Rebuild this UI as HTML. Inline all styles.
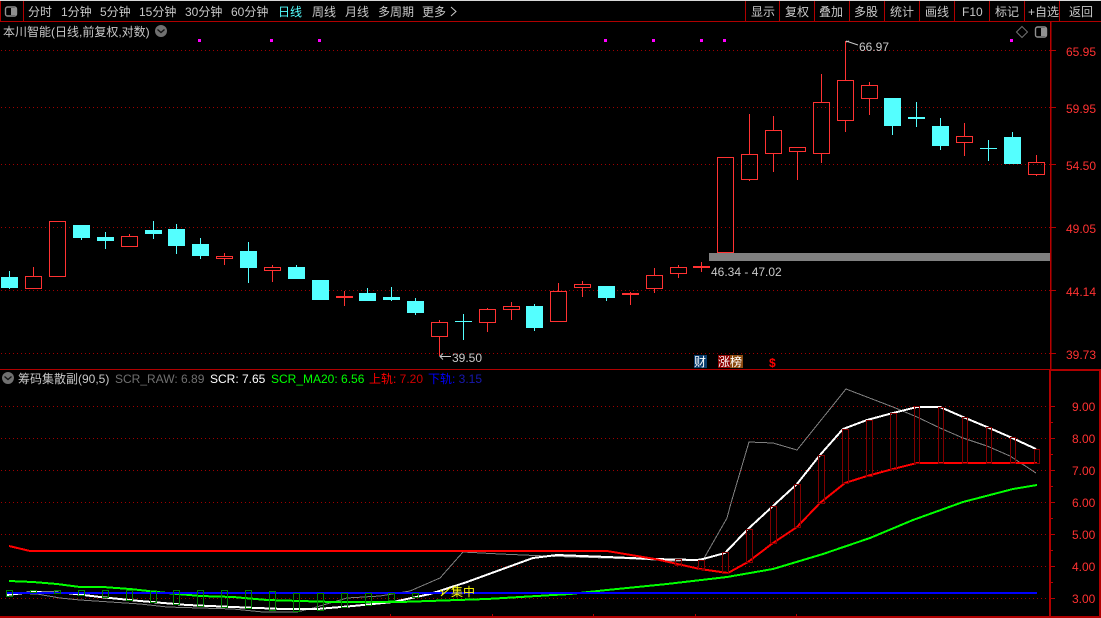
<!DOCTYPE html>
<html>
<head>
<meta charset="utf-8">
<style>
html,body{margin:0;padding:0;background:#000;width:1101px;height:618px;overflow:hidden}
svg{display:block}
text{font-family:"Liberation Sans","WenQuanYi Zen Hei","Noto Sans CJK SC",sans-serif;font-size:12px;white-space:pre}
.tb{fill:#c8c8c8}
.ax{fill:#ff3232}
.lb{fill:#c8c8c8}
</style>
</head>
<body>
<svg width="1101" height="618" viewBox="0 0 1101 618" xmlns="http://www.w3.org/2000/svg">
<defs>
<g id="gb">
<rect x="6.500" y="590.500" width="6" height="6"/><rect x="30.500" y="590.500" width="6" height="2"/><rect x="54.500" y="590.500" width="6" height="3"/><rect x="78.500" y="590.500" width="6" height="5"/><rect x="102.500" y="590.500" width="6" height="7"/><rect x="126.500" y="590.500" width="6" height="10"/><rect x="150.500" y="590.500" width="6" height="12"/><rect x="173.500" y="590.500" width="6" height="14"/><rect x="197.500" y="590.500" width="6" height="16"/><rect x="221.500" y="590.500" width="6" height="17"/><rect x="245.500" y="590.500" width="6" height="18"/><rect x="269.500" y="591.500" width="6" height="19"/><rect x="293.500" y="593.500" width="6" height="18"/><rect x="317.500" y="593.500" width="6" height="17"/><rect x="341.500" y="593.500" width="6" height="14"/><rect x="365.500" y="593.500" width="6" height="12"/><rect x="388.500" y="593.500" width="6" height="7"/><rect x="412.500" y="593.500" width="6" height="4"/>
</g>
<g id="rb">
<rect x="675.500" y="559.500" width="6" height="6"/><rect x="698.500" y="560.500" width="6" height="9"/><rect x="722.500" y="552.500" width="6" height="21"/><rect x="746.500" y="529.500" width="6" height="33"/><rect x="770.500" y="506.500" width="6" height="37"/><rect x="794.500" y="484.500" width="6" height="43"/><rect x="818.500" y="455.500" width="6" height="48"/><rect x="842.500" y="429.500" width="6" height="54"/><rect x="866.500" y="420.500" width="6" height="56"/><rect x="890.500" y="413.500" width="6" height="56"/><rect x="914.500" y="406.500" width="5" height="57"/><rect x="938.500" y="407.500" width="5" height="56"/><rect x="962.500" y="417.500" width="5" height="46"/><rect x="986.500" y="427.500" width="5" height="36"/><rect x="1010.500" y="437.500" width="5" height="26"/><rect x="1034.500" y="449.500" width="5" height="14"/>
</g>
</defs>
<rect width="1101" height="618" fill="#000"/>
<!-- toolbar -->
<rect x="0" y="0" width="1101" height="1" fill="#d8d8d8"/>
<g stroke="#b00000" fill="none" shape-rendering="crispEdges">
<path d="M0 21.500H1101M0.500 1V21M23.500 1V21M745.500 1V21M779.500 1V21M814.500 1V21M849.500 1V21M884.500 1V21M919.500 1V21M954.500 1V21M989.500 1V21M1024.500 1V21M1059.500 1V21"/>
</g>
<rect x="5.500" y="7" width="11" height="9" rx="2" fill="none" stroke="#909090" stroke-width="1.400"/>
<rect x="11" y="8" width="5" height="7" fill="#909090"/>
<g class="tb">
<text x="28" y="16">分时</text><text x="61" y="16">1分钟</text><text x="100" y="16">5分钟</text><text x="139" y="16">15分钟</text><text x="185" y="16">30分钟</text><text x="231" y="16">60分钟</text>
<text x="278" y="16" style="fill:#54ffff">日线</text><text x="312" y="16">周线</text><text x="345" y="16">月线</text><text x="378" y="16">多周期</text><text x="422" y="16">更多</text>
<text x="751" y="16">显示</text><text x="785" y="16">复权</text><text x="819" y="16">叠加</text><text x="854" y="16">多股</text><text x="890" y="16">统计</text><text x="925" y="16">画线</text><text x="962" y="16">F10</text><text x="995" y="16">标记</text><text x="1028" y="16">+自选</text><text x="1069" y="16">返回</text>
</g>
<path d="M451 7l5 4.500-5 4.500" fill="none" stroke="#c8c8c8"/>
<!-- title -->
<text x="3" y="36" class="tb">本川智能(日线,前复权,对数)</text>
<circle cx="161" cy="31" r="6" fill="#707070"/>
<path d="M157.500 29.500l3.500 3 3.500-3" fill="none" stroke="#111" stroke-width="1.300"/>
<path d="M1022 26.500l5.500 5.500-5.500 5.500-5.500-5.500z" fill="none" stroke="#707070"/>
<rect x="1035.500" y="27" width="11" height="10" rx="2" fill="none" stroke="#909090" stroke-width="1.400"/>
<rect x="1041" y="28" width="5" height="8" fill="#909090"/>
<!-- magenta -->
<g fill="#ff00ff">
<rect x="198" y="39" width="3" height="3"/><rect x="270" y="39" width="3" height="3"/><rect x="318" y="39" width="3" height="3"/><rect x="604" y="39" width="3" height="3"/><rect x="652" y="39" width="3" height="3"/><rect x="700" y="39" width="3" height="3"/><rect x="723" y="39" width="3" height="3"/><rect x="1010" y="39" width="3" height="3"/>
</g>
<!-- grids -->
<g stroke="#a00000" stroke-dasharray="1 3" shape-rendering="crispEdges">
<path d="M1 50.500H1050M1 107.500H1050M1 164.500H1050M1 227.500H1050M1 290.500H1050M1 353.500H1050"/>
<path d="M1 406.500H1050M1 438.500H1050M1 470.500H1050M1 502.500H1050M1 534.500H1050M1 566.500H1050M1 598.500H1050"/>
</g>
<!-- grey band -->
<rect x="709" y="253" width="341" height="8" fill="#808080"/>
<!-- candles red -->
<path shape-rendering="crispEdges" fill="none" stroke="#ff3232" d="M25.500 276.500h16v12h-16zM33.500 267v9M49.500 221.500h16v55h-16zM121.500 236.500h16v10h-16zM129.500 234v2M216.500 256.500h16v2h-16zM224.500 253v3M224.500 259v6M264.500 267.500h16v3h-16zM272.500 265v2M272.500 271v11M431.500 322.500h16v14h-16zM439.500 320v2M439.500 337v19M479.500 309.500h16v13h-16zM487.500 308v1M487.500 323v9M503.500 306.500h16v3h-16zM511.500 302v4M511.500 310v10M550.500 291.500h16v30h-16zM558.500 283v8M574.500 284.500h16v3h-16zM582.500 281v3M582.500 288v9M646.500 275.500h16v13h-16zM654.500 268v7M654.500 289v4M670.500 267.500h16v6h-16zM678.500 265v2M678.500 274v4M717.500 157.500h16v95h-16zM741.500 154.500h16v25h-16zM749.500 114v40M749.500 180v1M765.500 130.500h16v23h-16zM773.500 116v14M773.500 154v18M789.500 147.500h16v4h-16zM797.500 152v28M813.500 102.500h16v51h-16zM821.500 74v28M821.500 154v9M837.500 80.500h16v40h-16zM845.500 41v39M845.500 121v11M861.500 85.500h16v13h-16zM869.500 82v3M869.500 99v16M956.500 136.500h16v6h-16zM964.500 123v13M964.500 143v13M1028.500 162.500h16v12h-16zM1036.500 155v7M1036.500 175v1M344.500 291v15M630.500 292v13M701.500 262v10"/>
<g fill="#ff3232">
<rect x="336" y="296" width="17" height="2"/><rect x="622" y="293" width="17" height="2"/><rect x="693" y="266" width="17" height="2"/>
</g>
<!-- candles cyan -->
<path shape-rendering="crispEdges" fill="none" stroke="#54ffff" d="M9.500 271v18M81.500 238v2M105.500 232v17M153.500 221v18M176.500 224v30M200.500 238v21M248.500 242v41M296.500 265v4M367.500 288v6M391.500 287v14M415.500 298v17M463.500 314v26M534.500 304v27M606.500 297v4M892.500 125v10M916.500 102v25M940.500 118v32M988.500 140v21M1012.500 132v6"/>
<g fill="#54ffff">
<rect x="1" y="277" width="17" height="11"/><rect x="73" y="225" width="17" height="13"/><rect x="97" y="237" width="17" height="4"/><rect x="145" y="230" width="17" height="4"/><rect x="168" y="229" width="17" height="17"/><rect x="192" y="244" width="17" height="12"/><rect x="240" y="251" width="17" height="17"/><rect x="288" y="267" width="17" height="12"/><rect x="312" y="280" width="17" height="20"/><rect x="359" y="293" width="17" height="8"/><rect x="383" y="297" width="17" height="3"/><rect x="407" y="301" width="17" height="12"/><rect x="455" y="321" width="17" height="1"/><rect x="526" y="306" width="17" height="22"/><rect x="598" y="286" width="17" height="12"/><rect x="884" y="98" width="17" height="28"/><rect x="908" y="117" width="17" height="2"/><rect x="932" y="126" width="17" height="20"/><rect x="980" y="148" width="17" height="1"/><rect x="1004" y="137" width="17" height="27"/>
</g>
<!-- annotations -->
<path d="M846 42l3-1M846 41l12 4" fill="none" stroke="#c8c8c8"/>
<text x="859" y="51" class="lb">66.97</text>
<path d="M451 356.500H440M443 353.500l-3 3 3 3" fill="none" stroke="#c8c8c8"/>
<text x="452" y="362" class="lb">39.50</text>
<text x="711" y="276" class="lb">46.34 - 47.02</text>
<!-- badges -->
<rect x="694" y="355" width="13" height="13" fill="#0a3c6e"/>
<text x="694" y="366" style="fill:#fff">财</text>
<rect x="718" y="355" width="12" height="13" fill="#8b0000"/>
<rect x="730" y="355" width="13" height="13" fill="#8b4a10"/>
<text x="718" y="366" style="fill:#fff">涨榜</text>
<text x="769" y="367" style="fill:#ff0000;font-weight:bold">$</text>
<!-- axis -->
<g stroke="#b80000" fill="none" shape-rendering="crispEdges">
<path d="M1050.500 22V369" stroke-width="1.500"/>
<path d="M1050 50.500h6M1050 107.500h6M1050 164.500h6M1050 227.500h6M1050 290.500h6M1050 353.500h6"/>
<path d="M1050 406.500h5M1050 438.500h5M1050 470.500h5M1050 502.500h5M1050 534.500h5M1050 566.500h5M1050 598.500h5M1050 422.500h3M1050 454.500h3M1050 486.500h3M1050 518.500h3M1050 550.500h3M1050 582.500h3"/>
</g>
<rect x="0" y="369" width="1101" height="1" fill="#b00000"/>
<rect x="1050" y="370" width="50" height="247" fill="none" stroke="#b00000" stroke-width="2"/>
<rect x="0" y="616" width="1101" height="2" fill="#b00000"/>
<g stroke="#b00000" shape-rendering="crispEdges">
<path d="M390.500 614v2M492.500 614v2M593.500 614v2M695.500 614v2M796.500 614v2"/>
</g>
<g class="ax">
<text x="1066" y="56" style="fill:#ff3232">65.95</text><text x="1066" y="113" style="fill:#ff3232">59.95</text><text x="1066" y="170" style="fill:#ff3232">54.50</text><text x="1066" y="233" style="fill:#ff3232">49.05</text><text x="1066" y="296" style="fill:#ff3232">44.14</text><text x="1066" y="359" style="fill:#ff3232">39.73</text>
<text x="1072" y="411" style="fill:#ff3232">9.00</text><text x="1072" y="443" style="fill:#ff3232">8.00</text><text x="1072" y="475" style="fill:#ff3232">7.00</text><text x="1072" y="507" style="fill:#ff3232">6.00</text><text x="1072" y="539" style="fill:#ff3232">5.00</text><text x="1072" y="571" style="fill:#ff3232">4.00</text><text x="1072" y="603" style="fill:#ff3232">3.00</text>
</g>
<!-- legend -->
<circle cx="8" cy="378" r="6" fill="#707070"/>
<path d="M4.500 376.500l3.500 3 3.500-3" fill="none" stroke="#111" stroke-width="1.300"/>
<text x="18" y="383" class="tb">筹码集散副(90,5)</text>
<text x="115" y="383" style="fill:#707070">SCR_RAW: 6.89</text>
<text x="210" y="383" style="fill:#fff">SCR: 7.65</text>
<text x="271" y="383" style="fill:#00ff00">SCR_MA20: 6.56</text>
<text x="369" y="383" style="fill:#ff0000">上轨: <tspan style="fill:#d00000">7.20</tspan></text>
<text x="428" y="383" style="fill:#0000ff">下轨: <tspan style="fill:#1818b0">3.15</tspan></text>
<!-- lower chart lines -->
<g fill="none" shape-rendering="crispEdges">
<polyline stroke="#808080" stroke-width="1" points="703,560 727,518 731,503 749,442 773,443 797,450 846,389 893,407 917,417 940,428 963,438 987,446 1010,456 1036,473"/>
<polyline stroke="#808080" stroke-width="1" points="9,593 37,594 60,598 80,600 110,602 140,604 167,607 200,608 233,609 263,612 297,612 313,608 347,598 380,596 410,591 440,578 463,552 500,554 523,555 570,557 607,558 637,559 673,561 703,560"/>
<polyline stroke="#ffffff" stroke-width="2" points="7,595 33,592 67,593 100,597 140,601 187,605 233,607 283,609 317,609 353,606 393,602 430,594 467,582 500,570 533,558 557,555 607,557 653,559 697,560 703,559 725,553 748,529 773,506 797,484 820,455 843,429 867,420 893,413 917,407 940,407 963,417 987,427 1010,437 1036,449"/>
<polyline stroke="#00ff00" stroke-width="2" points="9,581 33,582 57,584 80,587 103,587 130,589 167,593 200,596 233,597 267,600 333,602 400,602 487,599 570,594 607,590 667,584 727,577 773,569 823,554 870,538 913,520 963,502 1013,489 1037,485"/>
<rect x="6" y="592" width="1031" height="2" fill="#0000ff" stroke="none"/>
<polyline stroke="#ff0000" stroke-width="2" points="9,546 30,551 607,551 655,559 700,569 728,573 748,562 773,543 797,527 820,503 845,483 867,476 893,469 917,463 1037,463"/>
</g>
<!-- dotted bars: black knock-out under coloured dots -->
<g fill="none" shape-rendering="crispEdges">
<use href="#gb" stroke="#000"/>
<use href="#gb" stroke="#00ff00" stroke-dasharray="1 1"/>
<use href="#rb" stroke="#000"/>
<use href="#rb" stroke="#ff0000" stroke-dasharray="1 1"/>
</g>
<!-- 集中 marker -->
<path d="M441 596l9-8M440 590l3 2-1 3" fill="none" stroke="#ffff00" stroke-width="1"/>
<text x="451" y="596" style="fill:#ffff00">集中</text>
</svg>
</body>
</html>
